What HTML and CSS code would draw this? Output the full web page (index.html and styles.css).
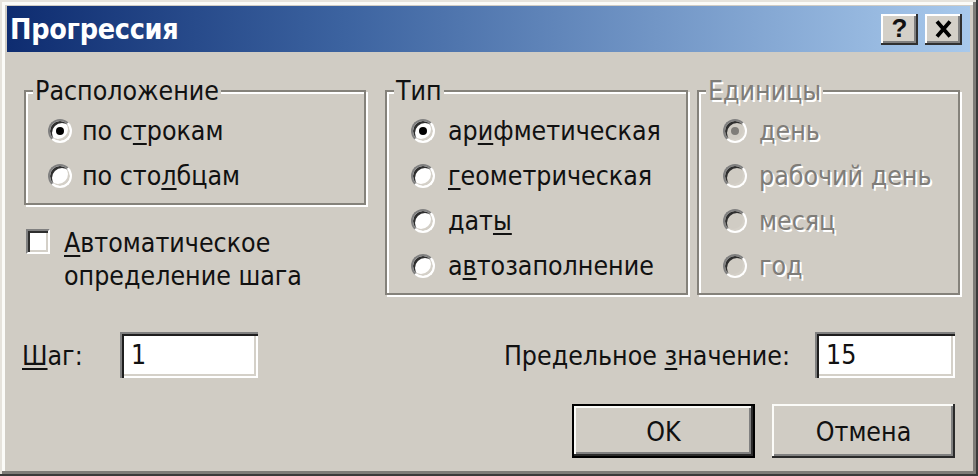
FILE: index.html
```html
<!DOCTYPE html>
<html lang="ru">
<head>
<meta charset="utf-8">
<title>Прогрессия</title>
<link rel="stylesheet" href="styles.css">
</head>
<body>
<div class="window">
  <div class="titlebar">
    <span class="title">Прогрессия</span>
    <div class="tbtns">
      <span class="tbtn q">?</span>
      <span class="tbtn x"><svg width="17" height="18" viewBox="0 0 17 18"><path d="M2 1.5 L15 16.5 M15 1.5 L2 16.5" stroke="#000" stroke-width="3.8" fill="none"/></svg></span>
    </div>
  </div>
  <div class="content">
    <div class="top">
      <div class="col1">
        <fieldset class="group g1">
          <legend>Расположение</legend>
          <div class="row"><span class="radio on"></span><span>по с<u>т</u>рокам</span></div>
          <div class="row"><span class="radio"></span><span>по сто<u>л</u>бцам</span></div>
        </fieldset>
        <div class="check">
          <span class="box"></span>
          <span class="ctext"><u>А</u>втоматическое<br>определение шага</span>
        </div>
      </div>
      <fieldset class="group g2">
        <legend>Тип</legend>
        <div class="row"><span class="radio on"></span><span>ар<u>и</u>фметическая</span></div>
        <div class="row"><span class="radio"></span><span><u>г</u>еометрическая</span></div>
        <div class="row"><span class="radio"></span><span>дат<u>ы</u></span></div>
        <div class="row"><span class="radio"></span><span>а<u>в</u>тозаполнение</span></div>
      </fieldset>
      <fieldset class="group g3 disabled">
        <legend>Единицы</legend>
        <div class="row"><span class="radio on"></span><span>день</span></div>
        <div class="row"><span class="radio"></span><span>рабочий день</span></div>
        <div class="row"><span class="radio"></span><span>месяц</span></div>
        <div class="row"><span class="radio"></span><span>год</span></div>
      </fieldset>
    </div>
    <div class="fields">
      <div class="field">
        <span class="lbl step"><u>Ш</u>аг:</span>
        <span class="input in1">1</span>
      </div>
      <div class="field">
        <span class="lbl">Предельное <u>з</u>начение:</span>
        <span class="input in2">15</span>
      </div>
    </div>
    <div class="buttons">
      <span class="btn default">OK</span>
      <span class="btn">Отмена</span>
    </div>
  </div>
</div>
</body>
</html>
```

FILE: styles.css
```css
body {
  margin: 0;
}

.window {
  width: 978px;
  height: 476px;
  box-sizing: border-box;
  padding: 6px 8px 6px 7px;
  background: #d0ccc4;
  box-shadow: inset -2px -2px 0 #3a3a3a, inset 2px 2px 0 #e6e3dc, inset -5px -5px 0 #7e7c78, inset 5px 5px 0 #fbfbf8;
  font-family: "DejaVu Sans Condensed", "DejaVu Sans", sans-serif;
  font-size: 26.5px;
  color: #111;
  display: flex;
  flex-direction: column;
}

.titlebar {
  height: 46px;
  flex: none;
  background: linear-gradient(to right, #0e2c70 0%, #3c63a0 35%, #a8c9ec 100%);
  display: flex;
  align-items: center;
  justify-content: space-between;
  padding: 0 8px 0 3px;
}

.title {
  color: #fff;
  font-weight: bold;
  font-size: 28.5px;
  letter-spacing: -0.3px;
}

.tbtns {
  display: flex;
  gap: 7px;
}

.tbtn {
  width: 37px;
  height: 31px;
  box-sizing: border-box;
  background: #d4d0c8;
  box-shadow: inset -2px -2px 0 #303030, inset 2px 2px 0 #fff, inset -4px -4px 0 #808080;
  display: flex;
  align-items: center;
  justify-content: center;
}

.tbtn.q {
  font-family: "Liberation Sans", sans-serif;
  font-weight: bold;
  font-size: 26px;
  line-height: 1;
  padding-bottom: 2px;
}

.content {
  flex: 1;
  padding: 26px 10px 0 15px;
}

.top {
  display: flex;
  align-items: flex-start;
}

.col1 {
  width: 342px;
  margin-left: 2px;
  margin-right: 19px;
  flex: none;
}

.group {
  margin: 0;
  padding: 4px 0 5px 0;
  border: 2px solid #85827b;
  box-shadow: inset 2px 2px 0 #fff, 2px 2px 0 #fff;
  box-sizing: border-box;
  min-width: 0;
}

.group legend {
  padding: 0 2px;
  margin-left: 7px;
  line-height: 26px;
  background: #d0ccc4;
}

.g2 {
  width: 303px;
  margin-right: 9px;
  flex: none;
}

.g3 {
  width: 263px;
  flex: none;
}

.row {
  height: 45px;
  display: flex;
  align-items: center;
  gap: 10px;
  padding-left: 22px;
}

.g2 .row {
  padding-left: 24px;
  gap: 13px;
}

.g3 .row {
  padding-left: 24px;
  gap: 12px;
}

u {
  text-decoration-thickness: 2px;
  text-underline-offset: 3px;
}

.radio {
  width: 24px;
  height: 24px;
  flex: none;
  box-sizing: border-box;
  border-radius: 50%;
  background: #fff;
  border: 2px solid;
  border-color: #808080 #fff #fff #808080;
  box-shadow: inset 2px 2px 0 #2e2e2e, inset -2px -2px 0 #d4d0c8;
  display: flex;
  align-items: center;
  justify-content: center;
}

.radio.on::after {
  content: "";
  width: 8px;
  height: 8px;
  border-radius: 50%;
  background: #000;
}

.disabled {
  color: #7f7d79;
  text-shadow: 2px 2px 0 #fff;
}

.disabled .radio {
  background: #d0ccc4;
}

.disabled .radio.on::after {
  background: #7f7d79;
}

.check {
  display: flex;
  align-items: flex-start;
  gap: 14px;
  margin-top: 21px;
  margin-left: 2px;
}

.box {
  width: 24px;
  height: 25px;
  flex: none;
  box-sizing: border-box;
  margin-top: 3px;
  background: #fff;
  border: 2px solid;
  border-color: #808080 #fff #fff #808080;
  box-shadow: inset 2px 2px 0 #2e2e2e, inset -2px -2px 0 #d4d0c8;
}

.ctext {
  line-height: 33px;
}

.fields {
  display: flex;
  justify-content: space-between;
  align-items: center;
  margin-top: 37px;
  margin-right: 5px;
}

.field {
  display: flex;
  align-items: center;
}

.lbl {
  margin-right: 25px;
}

.lbl.step {
  width: 98px;
  margin-right: 0;
}

.input {
  height: 46px;
  box-sizing: border-box;
  background: #fff;
  box-shadow: inset 2px 2px 0 #808080, inset 4px 4px 0 #1e1e1e, inset -2px -2px 0 #fff, inset -4px -4px 0 #d4d0c8;
  padding-left: 11px;
  line-height: 46px;
}

.in1 {
  width: 138px;
}

.in2 {
  width: 140px;
}

.buttons {
  display: flex;
  justify-content: flex-end;
  gap: 17px;
  margin-top: 26px;
  margin-right: 5px;
}

.btn {
  width: 183px;
  height: 54px;
  box-sizing: border-box;
  background: #d0ccc4;
  box-shadow: inset -2px -2px 0 #2a2a2a, inset 2px 2px 0 #fbfbf8, inset -4px -4px 0 #808080;
  display: flex;
  align-items: center;
  justify-content: center;
}

.btn.default {
  border: 2px solid #000;
}
```
